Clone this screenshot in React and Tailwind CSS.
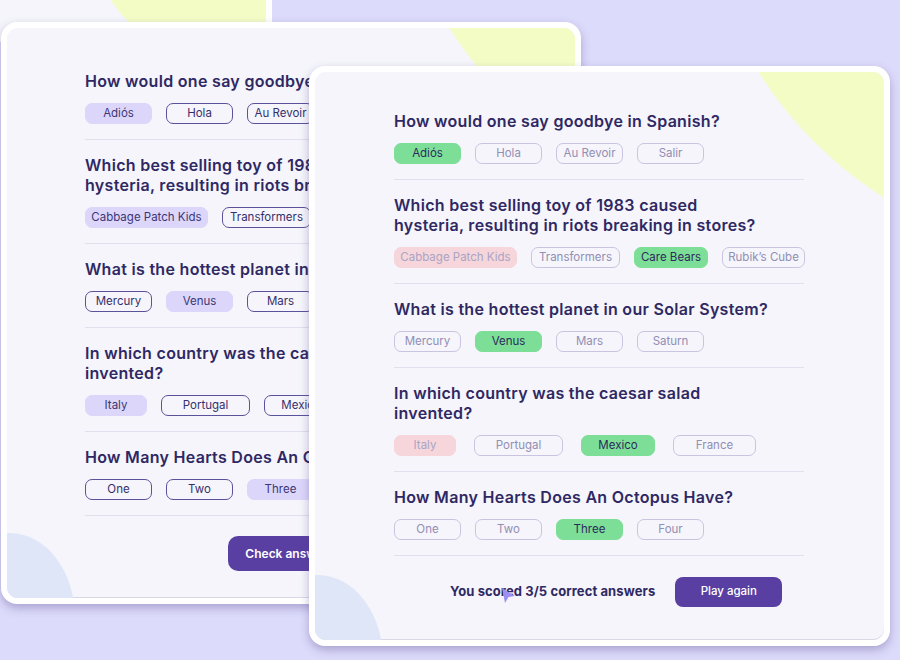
import React from 'react';

const QUESTIONS = [
  {
    lines: ['How would one say goodbye in Spanish?'],
    answers: [['Adiós', 'w-[67px]'], ['Hola', 'w-[67px]'], ['Au Revoir', 'w-[67px]'], ['Salir', 'w-[67px]']],
    correct: 0,
    picked: 0,
  },
  {
    lines: ['Which best selling toy of 1983 caused', 'hysteria, resulting in riots breaking in stores?'],
    answers: [['Cabbage Patch Kids', 'w-[123px]'], ['Transformers', 'w-[89px]'], ['Care Bears', 'w-[74px]'], ['Rubik’s Cube', 'w-[83px]']],
    correct: 2,
    picked: 0,
  },
  {
    lines: ['What is the hottest planet in our Solar System?'],
    answers: [['Mercury', 'w-[67px]'], ['Venus', 'w-[67px]'], ['Mars', 'w-[67px]'], ['Saturn', 'w-[67px]']],
    correct: 1,
    picked: 1,
  },
  {
    lines: ['In which country was the caesar salad', 'invented?'],
    answers: [['Italy', 'w-[62px]'], ['Portugal', 'w-[89px]'], ['Mexico', 'w-[74px]'], ['France', 'w-[83px]']],
    correct: 2,
    picked: 0,
    wide: true,
  },
  {
    lines: ['How Many Hearts Does An Octopus Have?'],
    answers: [['One', 'w-[67px]'], ['Two', 'w-[67px]'], ['Three', 'w-[67px]'], ['Four', 'w-[67px]']],
    correct: 2,
    picked: 2,
  },
];

const font = { fontFamily: 'Inter, "Noto Sans", sans-serif' };

function answerClass(q, i, checked) {
  if (!checked) {
    return i === q.picked
      ? 'border-[#ddd6fb] bg-[#ddd6fb] text-[#3b3676]'
      : 'border-[#5b5399] text-[#35306b]';
  }
  if (i === q.correct) return 'border-[#7ddf97] bg-[#7ddf97] text-[#2c2a5c]';
  if (i === q.picked) return 'border-[#f6d6da] bg-[#f6d6da] text-[#aaa4c6]';
  return 'border-[#c9c5e0] text-[#928eb4]';
}

function Question({ q, checked, first }) {
  return (
    <div className={first ? '' : 'pt-[15px]'}>
      <h2 className="whitespace-nowrap text-[16px] font-semibold leading-[20px] tracking-[0.3px] text-[#2f2863]">
        {q.lines.map((l) => (
          <div key={l}>{l}</div>
        ))}
      </h2>
      <div className={`mt-[12px] flex ${checked && q.wide ? 'gap-[18px]' : 'gap-[14px]'}`}>
        {q.answers.map(([text, w], i) => (
          <div
            key={text}
            className={`flex h-[21px] shrink-0 items-center justify-center whitespace-nowrap rounded-[7px] border text-[11.5px] ${w} ${answerClass(q, i, checked)}`}
          >
            {text}
          </div>
        ))}
      </div>
      <div className="mt-[15px] h-px w-[410px] bg-[#e1dfee]" />
    </div>
  );
}

// white frame + pale panel, with the two decorative blobs
function Card({ className, children }) {
  return (
    <div className={`absolute rounded-[16px] bg-white p-[6px] shadow-[0_4px_10px_rgba(70,60,130,0.35)] ${className}`}>
      <div className="relative h-full overflow-hidden rounded-[11px] bg-[#f5f5fb] shadow-[inset_0_-1px_0_#d9d9e6]">
        <div className="absolute right-[-613px] top-[-613px] h-[800px] w-[800px] rounded-full bg-[#f4fcc6]" />
        <div className="absolute bottom-[-105px] left-[-62px] h-[170px] w-[130px] rounded-[50%] bg-[#dfe6f8]" />
        <div className="relative">{children}</div>
      </div>
    </div>
  );
}

export default function App() {
  return (
    <div className="relative h-[660px] w-[900px] overflow-hidden bg-[#dddbfb]" style={font}>
      {/* third window peeking in at the top */}
      <div className="absolute left-[-30px] top-[-220px] h-[262px] w-[302px] rounded-[16px] bg-white p-[6px]">
        <div className="relative h-full overflow-hidden rounded-[11px] bg-[#f5f5fb]">
          <div className="absolute left-[90px] top-[-157px] h-[468px] w-[468px] rounded-full bg-[#f4fcc6]" />
        </div>
      </div>

      {/* quiz, before checking */}
      <Card className="left-[1px] top-[22px] h-[582px] w-[580px]">
        <div className="pl-[78px] pt-[43px]">
          {QUESTIONS.map((q, i) => (
            <Question key={i} q={q} first={i === 0} />
          ))}
          <div className="mt-[20px] flex w-[410px] justify-center">
            <button className="h-[35px] w-[124px] rounded-[10px] bg-[#5a3fa3] text-[12px] font-semibold text-white">
              Check answers
            </button>
          </div>
        </div>
      </Card>

      {/* quiz, after checking */}
      <Card className="left-[309px] top-[66px] h-[580px] w-[581px]">
        <div className="pl-[79px] pt-[39px]">
          {QUESTIONS.map((q, i) => (
            <Question key={i} q={q} checked first={i === 0} />
          ))}
          <div className="mt-[21px] flex items-center gap-[20px] pl-[56px]">
            <span className="text-[13px] font-bold tracking-[0.1px] text-[#2f2863]">You scored 3/5 correct answers</span>
            <button className="h-[30px] w-[107px] rounded-[8px] bg-[#5a3fa3] text-[11.5px] font-medium text-white">
              Play again
            </button>
          </div>
        </div>
      </Card>

      {/* mouse pointer */}
      <svg className="absolute left-[502px] top-[588px]" width="14" height="16" viewBox="0 0 14 16">
        <path d="M0 0 L13 8 L6.5 9 L3 15 Z" fill="#9d8ef2" />
      </svg>
    </div>
  );
}
